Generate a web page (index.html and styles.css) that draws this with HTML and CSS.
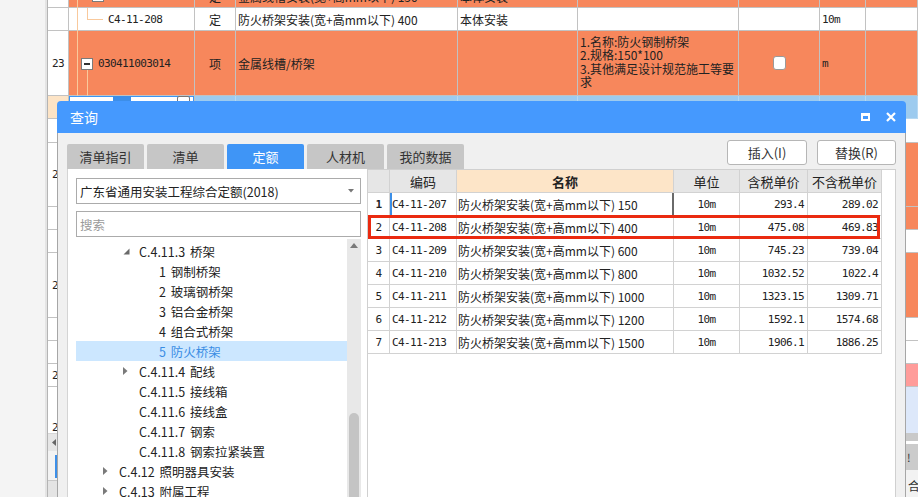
FILE: index.html
```html
<!DOCTYPE html>
<html lang="zh-CN">
<head>
<meta charset="utf-8">
<title>查询</title>
<link rel="stylesheet" href="styles.css">
</head>
<body>
<div class="app">
  <div class="nav"></div>
  <div class="main">
    <div class="sheet">
      <div class="sheet-inner">
        <div class="row orange r0">
          <div class="c rn"></div>
          <div class="c tree-cell"><span class="tl v1"></span><span class="tbox b0"></span></div>
          <div class="c ctr">定</div>
          <div class="c txt">金属线槽安装(宽+高mm以下) 150</div>
          <div class="c txt">本体安装</div>
          <div class="c"></div><div class="c"></div><div class="c"></div><div class="c"></div>
        </div>
        <div class="row white r1">
          <div class="c rn"></div>
          <div class="c tree-cell"><span class="tl v1"></span><span class="tl v2"></span><span class="tl h2"></span><span class="code mono">C4-11-208</span></div>
          <div class="c ctr">定</div>
          <div class="c txt">防火桥架安装(宽+高mm以下) 400</div>
          <div class="c txt">本体安装</div>
          <div class="c"></div><div class="c"></div>
          <div class="c txt mono">10m</div>
          <div class="c"></div>
        </div>
        <div class="row orange r2">
          <div class="c rn mono">23</div>
          <div class="c tree-cell"><span class="tl v1"></span><span class="tbox b2"></span><span class="tl v3"></span><span class="code2 mono">030411003014</span></div>
          <div class="c ctr">项</div>
          <div class="c txt">金属线槽/桥架</div>
          <div class="c"></div>
          <div class="c desc">1.名称:防火钢制桥架<br>2.规格:150*100<br>3.其他满足设计规范施工等要<br>求</div>
          <div class="c ctr"><span class="chk"></span></div>
          <div class="c txt mono">m</div>
          <div class="c"></div>
        </div>
        <div class="row sel r3">
          <div class="c rn peach"></div>
          <div class="c edit"><span class="ebar"></span><span class="ebox"></span></div>
          <div class="c"></div><div class="c"></div><div class="c"></div><div class="c"></div><div class="c"></div><div class="c"></div><div class="c"></div>
        </div>
        <div class="row2 h24"><div class="c rn"></div><div class="rest white"></div></div>
        <div class="row2 h64"><div class="c rn mono">24</div><div class="rest orange"></div></div>
        <div class="row2 h23"><div class="c rn"></div><div class="rest orange"></div></div>
        <div class="row2 h23"><div class="c rn"></div><div class="rest white"></div></div>
        <div class="row2 h65"><div class="c rn mono">25</div><div class="rest orange"></div></div>
        <div class="row2 h23"><div class="c rn"></div><div class="rest white"></div></div>
        <div class="row2 h23"><div class="c rn"></div><div class="rest white"></div></div>
        <div class="row2 h23"><div class="c rn mono">26</div><div class="rest pink"></div></div>
        <div class="row2 h81"><div class="c rn mono">27</div><div class="rest pale"></div></div>
      </div>
    </div>
    <div class="foot">
      <div class="foot-left">
        <div class="hs"><svg width="4" height="7" viewBox="0 0 4 7"><polygon points="4,0 4,7 0,3.5" fill="#666"/></svg></div>
        <div class="fmid"><span class="bbar"></span></div>
        <div class="fbot"></div>
      </div>
      <div class="foot-right">
        <div class="s1"></div>
        <div class="s2"></div>
        <div class="s3">!</div>
        <div class="s4">合</div>
      </div>
    </div>
  </div>
</div>

<div class="dlg">
  <div class="dlg-title">
    <span class="title-text">查询</span>
    <span class="ctrls">
      <svg width="9" height="8" viewBox="0 0 9 8"><path d="M0 0H9V8H0Z M2 3V6H7V3Z" fill="#fff" fill-rule="evenodd"/></svg>
      <svg width="10" height="10" viewBox="0 0 10 10"><path d="M1 1L9 9M9 1L1 9" stroke="#fff" stroke-width="2.2"/></svg>
    </span>
  </div>
  <div class="dlg-body">
    <div class="toolbar">
      <div class="tabs">
        <div class="tab">清单指引</div>
        <div class="tab">清单</div>
        <div class="tab active">定额</div>
        <div class="tab">人材机</div>
        <div class="tab">我的数据</div>
      </div>
      <div class="btns">
        <div class="btn">插入(I)</div>
        <div class="btn">替换(R)</div>
      </div>
    </div>
    <div class="content">
      <div class="left">
        <div class="select">广东省通用安装工程综合定额(2018)<svg class="caret" width="6" height="4" viewBox="0 0 6 4"><polygon points="0,0 6,0 3,3.5" fill="#777"/></svg></div>
        <div class="search">搜索</div>
        <div class="tree-wrap">
          <div class="tree">
            <div class="ti l3"><span class="tw"><svg width="7" height="7" viewBox="0 0 7 7"><polygon points="6.5,0.5 6.5,6.5 0.5,6.5" fill="#6a6a6a"/></svg></span>C.4.11.3 桥架</div>
            <div class="ti l4"><span class="tw"></span>1 钢制桥架</div>
            <div class="ti l4"><span class="tw"></span>2 玻璃钢桥架</div>
            <div class="ti l4"><span class="tw"></span>3 铝合金桥架</div>
            <div class="ti l4"><span class="tw"></span>4 组合式桥架</div>
            <div class="ti l4 on"><span class="tw"></span>5 防火桥架</div>
            <div class="ti l3"><span class="tw"><svg width="5" height="8" viewBox="0 0 5 8"><polygon points="0,0 4.5,4 0,8" fill="#7a7a7a"/></svg></span>C.4.11.4 配线</div>
            <div class="ti l3"><span class="tw"></span>C.4.11.5 接线箱</div>
            <div class="ti l3"><span class="tw"></span>C.4.11.6 接线盒</div>
            <div class="ti l3"><span class="tw"></span>C.4.11.7 钢索</div>
            <div class="ti l3"><span class="tw"></span>C.4.11.8 钢索拉紧装置</div>
            <div class="ti l2"><span class="tw"><svg width="5" height="8" viewBox="0 0 5 8"><polygon points="0,0 4.5,4 0,8" fill="#7a7a7a"/></svg></span>C.4.12 照明器具安装</div>
            <div class="ti l2"><span class="tw"><svg width="5" height="8" viewBox="0 0 5 8"><polygon points="0,0 4.5,4 0,8" fill="#7a7a7a"/></svg></span>C.4.13 附属工程</div>
          </div>
          <div class="vscroll">
            <svg class="up" width="8" height="5" viewBox="0 0 8 5"><polygon points="0,5 8,5 4,0" fill="#7a7a7a"/></svg>
            <span class="thumb"></span>
          </div>
        </div>
      </div>
      <div class="right">
        <div class="qt">
          <div class="h"></div><div class="h">编码</div><div class="h hname">名称</div><div class="h">单位</div><div class="h">含税单价</div><div class="h">不含税单价</div>

          <div class="d rno mono b">1</div><div class="d code mono cur">C4-11-207</div><div class="d nm curr">防火桥架安装(宽+高mm以下) 150</div><div class="d unit mono">10m</div><div class="d num mono">293.4</div><div class="d num mono">289.02</div>
          <div class="d rno mono">2</div><div class="d code mono">C4-11-208</div><div class="d nm">防火桥架安装(宽+高mm以下) 400</div><div class="d unit mono">10m</div><div class="d num mono">475.08</div><div class="d num mono">469.83</div>
          <div class="d rno mono">3</div><div class="d code mono">C4-11-209</div><div class="d nm">防火桥架安装(宽+高mm以下) 600</div><div class="d unit mono">10m</div><div class="d num mono">745.23</div><div class="d num mono">739.04</div>
          <div class="d rno mono">4</div><div class="d code mono">C4-11-210</div><div class="d nm">防火桥架安装(宽+高mm以下) 800</div><div class="d unit mono">10m</div><div class="d num mono">1032.52</div><div class="d num mono">1022.4</div>
          <div class="d rno mono">5</div><div class="d code mono">C4-11-211</div><div class="d nm">防火桥架安装(宽+高mm以下) 1000</div><div class="d unit mono">10m</div><div class="d num mono">1323.15</div><div class="d num mono">1309.71</div>
          <div class="d rno mono">6</div><div class="d code mono">C4-11-212</div><div class="d nm">防火桥架安装(宽+高mm以下) 1200</div><div class="d unit mono">10m</div><div class="d num mono">1592.1</div><div class="d num mono">1574.68</div>
          <div class="d rno mono">7</div><div class="d code mono">C4-11-213</div><div class="d nm">防火桥架安装(宽+高mm以下) 1500</div><div class="d unit mono">10m</div><div class="d num mono">1906.1</div><div class="d num mono">1886.25</div>
        </div>
        <div class="redbox"></div>
      </div>
    </div>
  </div>
</div>
</body>
</html>
```

FILE: styles.css
```css
* { box-sizing: border-box; }
html, body { margin: 0; padding: 0; }
body {
  width: 918px;
  height: 497px;
  overflow: hidden;
  position: relative;
  background: #f4f4f4;
  font-family: "Noto Sans CJK SC", "Noto Sans", sans-serif;
  font-size: 12px;
  color: #222;
}
.mono { font-family: "DejaVu Sans Mono", "Liberation Mono", monospace; font-size: 11px; letter-spacing: -0.6px; }

.app { display: flex; height: 497px; }
.nav { width: 48px; flex: none; background: #f4f4f4; border-right: 1px solid #b4b4b4; box-shadow: inset -2px 0 0 #e4e4e4; }
.main { flex: 1; display: flex; flex-direction: column; overflow: hidden; background: #fff; }

.sheet { height: 433px; overflow: hidden; flex: none; }
.sheet-inner { margin-top: -15px; }
.row {
  display: grid;
  grid-template-columns: 21px 126px 41px 222px 120px 161px 81px 46px 52px;
  height: 23px;
}
.row.r2 { height: 65px; }
.row2 { display: grid; grid-template-columns: 21px 1fr; }
.h23 { height: 23px; }
.h24 { height: 24px; }
.h64 { height: 64px; }
.h65 { height: 65px; }
.h81 { height: 81px; }
.c {
  border-right: 1px solid #c2c2c2;
  border-bottom: 1px solid #c2c2c2;
  display: flex;
  align-items: center;
  position: relative;
  white-space: nowrap;
  overflow: hidden;
}
.c.rn { background: #fff; justify-content: center; color: #222; }
.c.rn.peach { background: #fde4c6; }
.c.ctr { justify-content: center; }
.c.txt { padding-left: 2px; }
.orange .c:not(.rn), .rest.orange { background: #f7875c; }
.white .c, .rest.white { background: #fff; }
.rest { border-bottom: 1px solid #c2c2c2; }
.rest.pink { background: #ff9c9a; }
.rest.pale { background: #dde8fa; }
.sel .c:not(.rn):not(.edit) { background: #9dcbef; border-color: #b6d8f2; }

.tree-cell { overflow: visible; }
.tl { position: absolute; background: #f9c99c; }
.tl.v1 { left: 8px; top: 0; bottom: -1px; width: 1px; }
.tl.v2 { left: 18px; top: 0; height: 12px; width: 1px; }
.tl.h2 { left: 18px; top: 11px; width: 16px; height: 1px; }
.tl.v3 { left: 18px; top: 39px; bottom: -1px; width: 1px; }
.tbox { position: absolute; background: #fff; border: 1px solid #7a7a7a; }
.tbox.b0 { left: 23px; top: 5px; width: 12px; height: 12px; }
.tbox.b2 { left: 12px; top: 27px; width: 12px; height: 12px; }
.tbox.b2::after { content: ""; position: absolute; left: 2px; right: 2px; top: 4px; height: 2px; background: #333; }
.code { padding-left: 39px; }
.code2 { padding-left: 29px; }
.desc { display: block; white-space: normal; padding: 4px 0 0 2px; line-height: 13.4px; }
.chk { width: 13px; height: 14px; background: #fff; border: 1px solid #9a9a9a; border-radius: 3px; }
.edit { background: #fff; box-shadow: inset 0 0 0 1px #3a96f5; overflow: visible; }
.ebar { position: absolute; left: 44px; top: 0; width: 18px; height: 5px; background: #3d8ee8; }
.ebox { position: absolute; left: 108px; top: 0; width: 13px; height: 9px; border: 1px solid #777; border-radius: 2px; background: #fff; }

.foot { height: 64px; display: flex; flex: none; }
.foot-left { flex: 1; display: flex; flex-direction: column; }
.hs { height: 18px; background: #e6e6e6; border-top: 1px solid #d6d6d6; display: flex; align-items: center; padding-left: 4px; }
.fmid { height: 29px; background: #f3f3f3; padding: 4px 0 0 7px; }
.bbar { display: block; width: 2px; height: 23px; background: #3d8fe8; }
.fbot { flex: 1; background: #e4e4e4; border-top: 1px solid #c8c8c8; }
.foot-right { width: 12px; display: flex; flex-direction: column; font-size: 11px; overflow: hidden; }
.s1 { height: 8px; background: #c9c9c9; }
.s2 { height: 3px; background: #fff; }
.s3 { height: 26px; background: #cbcbcb; line-height: 26px; padding-left: 1px; color: #333; }
.s4 { flex: 1; background: #f2f2f2; padding: 7px 0 0 2px; font-size: 12px; color: #333; }

/* dialog */
.dlg { position: absolute; left: 57px; top: 101px; width: 849px; height: 420px; display: flex; flex-direction: column; }
.dlg-title {
  height: 32px;
  flex: none;
  background: #4599fe;
  border-radius: 4px 4px 0 0;
  display: flex;
  align-items: center;
  padding: 0 10px 0 13px;
  color: #fff;
  font-size: 14px;
}
.title-text { flex: 1; }
.ctrls { display: flex; align-items: center; gap: 16px; }
.ctrls svg { display: block; }
.dlg-body {
  flex: 1;
  background: #f0f0f0;
  border: 1px solid #a6a6a6;
  border-top: none;
  padding: 7px 9px 0 9px;
  display: flex;
  flex-direction: column;
}
.toolbar { height: 29px; display: flex; justify-content: space-between; flex: none; }
.tabs { display: flex; gap: 3px; align-self: flex-end; }
.tab {
  width: 77px;
  height: 25px;
  background: #c6c6c6;
  border-radius: 2px 2px 0 0;
  display: flex;
  align-items: center;
  justify-content: center;
  font-size: 13px;
  color: #333;
}
.tab.active { background: #3f95f6; color: #fff; }
.btns { display: flex; gap: 10px; align-self: flex-start; }
.btn {
  width: 80px;
  height: 25px;
  background: #fff;
  border: 1px solid #b6b6b6;
  border-radius: 3px;
  display: flex;
  align-items: center;
  justify-content: center;
  font-size: 13px;
  color: #333;
}
.btn + .btn { width: 79px; }
.content { flex: 1; display: flex; min-height: 0; }
.left {
  width: 300px;
  flex: none;
  background: #fff;
  border-left: 1px solid #d4d4d4;
  padding: 9px 6px 0 8px;
  display: flex;
  flex-direction: column;
}
.select, .search {
  height: 26px;
  flex: none;
  border: 1px solid #ababab;
  display: flex;
  align-items: center;
  padding-left: 3px;
  font-size: 12.5px;
  background: #fff;
}
.select { justify-content: space-between; padding-right: 6px; color: #222; }
.search { margin-top: 7px; color: #9a9a9a; }
.tree-wrap { margin-top: 2px; flex: 1; display: flex; min-height: 0; }
.tree { flex: 1; padding-top: 2px; }
.ti { height: 20px; display: flex; align-items: center; font-size: 12.5px; color: #222; white-space: nowrap; word-spacing: 2px; }
.ti.l2 { padding-left: 27px; }
.ti.l3 { padding-left: 47px; }
.ti.l4 { padding-left: 67px; }
.ti.on { background: #cce7ff; color: #3a8de4; }
.tw { width: 16px; flex: none; display: flex; align-items: center; }
.tw svg { display: block; }
.vscroll { width: 14px; flex: none; background: #e8e8e8; display: flex; flex-direction: column; align-items: center; }
.vscroll .up { margin-top: 4px; display: block; }
.thumb { display: block; width: 10px; height: 120px; margin-top: 165px; background: #c4c4c4; border-radius: 5px; }

.right {
  flex: 1;
  background: #fff;
  border: 1px solid #d0d0d0;
  border-bottom: none;
  position: relative;
}
.qt { display: grid; grid-template-columns: 22px 67px 217px 66px 68px 74px; width: 514px; }
.qt > div {
  height: 23px;
  border-right: 1px solid #d2d2d2;
  border-bottom: 1px solid #d2d2d2;
  display: flex;
  align-items: center;
  white-space: nowrap;
  overflow: hidden;
}
.qt .h { background: #e6e6e6; justify-content: center; font-size: 13px; color: #222; }
.qt .h.hname { background: #fde5c8; font-weight: bold; }
.qt .rno { justify-content: center; }
.qt .rno.b { font-weight: bold; }
.qt .code { padding-left: 2px; }
.qt .code.cur { box-shadow: inset 2px 0 0 #3b8fe8; }
.qt .nm { padding-left: 1px; font-size: 12px; }
.qt .nm.curr { border-right: 2px solid #6a6a6a; }
.qt .unit { justify-content: center; }
.qt .num { justify-content: flex-end; padding-right: 3px; }
.redbox {
  position: absolute;
  left: 0;
  top: 45px;
  width: 512px;
  height: 24px;
  border: 3px solid #ea2a10;
}
```
